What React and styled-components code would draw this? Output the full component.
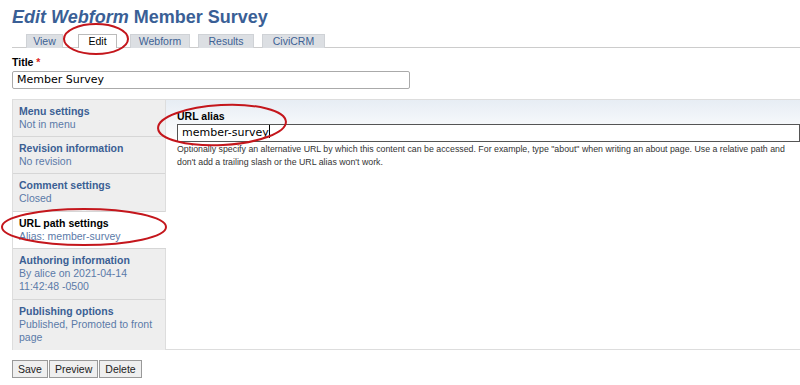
import React from 'react'
import styled, { createGlobalStyle } from 'styled-components'

const Global = createGlobalStyle`
  body {
    margin: 0;
    background: #fff;
    font-family: "Liberation Sans", Arial, sans-serif;
    color: #000;
  }
`

const Page = styled.div`
  position: relative;
  width: 800px;
  height: 385px;
  overflow: hidden;
  padding: 6px 0 0 12px;
  box-sizing: border-box;
`

const Heading = styled.h1`
  margin: 0;
  font-size: 18px;
  font-weight: bold;
  color: #3a5f96;
  line-height: 22px;
  em { font-style: italic; }
`

const Tabs = styled.ul`
  display: flex;
  list-style: none;
  margin: 6px 0 0 0;
  padding: 0 0 0 14px;
  border-bottom: 1px solid #ccc;
  height: 13px;
`

const Tab = styled.li`
  box-sizing: border-box;
  height: 14px;
  width: ${p => p.w}px;
  margin-right: ${p => p.gap}px;
  background: ${p => (p.active ? '#fff' : '#dcdfe3')};
  border: 1px solid ${p => (p.active ? '#bbb' : '#cfd2d6')};
  border-bottom: none;
  font-size: 10.5px;
  line-height: 13px;
  text-align: center;
  color: ${p => (p.active ? '#000' : '#3d6295')};
`

const Label = styled.label`
  display: block;
  font-size: 10.5px;
  font-weight: bold;
  line-height: 12px;
  margin-top: ${p => p.top || 0}px;
  span { color: #d22; }
`

const TextInput = styled.div`
  box-sizing: border-box;
  width: ${p => p.w};
  height: 18px;
  border: 1px solid ${p => (p.dark ? '#555' : '#aaa')};
  border-radius: ${p => (p.dark ? '0' : '2px')};
  margin-top: ${p => (p.dark ? 2 : 3)}px;
  padding: 0 4px;
  font-family: "DejaVu Sans", "Liberation Sans", sans-serif;
  font-size: 11px;
  line-height: 16px;
  background: #fff;
`

const Caret = styled.span`
  display: inline-block;
  width: 1px;
  height: 13px;
  background: #000;
  vertical-align: -2px;
`

const VerticalTabs = styled.div`
  display: flex;
  margin-top: 10px;
  border-top: 1px solid #ddd;
  border-bottom: 1px solid #ddd;
  height: 251px;
  box-sizing: border-box;
`

const Menu = styled.ul`
  list-style: none;
  margin: 0;
  padding: 0;
  width: 154px;
  flex: none;
  background: #eee;
  border-left: 1px solid #ddd;
  border-right: 1px solid #ddd;
  box-sizing: border-box;
`

const MenuItem = styled.li`
  box-sizing: border-box;
  height: ${p => p.h}px;
  padding: 5px 6px 0 6px;
  border-bottom: 1px solid #d6d6d6;
  background: ${p => (p.selected ? '#fff' : '#eee')};
  margin-right: ${p => (p.selected ? '-1px' : '0')};
  font-size: 10.5px;
  line-height: 13px;
  &:last-child { border-bottom: none; }
`

const ItemTitle = styled.div`
  font-weight: bold;
  color: ${p => (p.selected ? '#000' : '#3b5f94')};
`

const ItemSummary = styled.div`
  color: #5b7aa8;
`

const Pane = styled.div`
  flex: 1;
  padding: 10px 0 0 11px;
  background: linear-gradient(#e7edf4 0px, #fff 40px);
`

const Description = styled.div`
  font-size: 8.8px;
  line-height: 13px;
  color: #333;
  margin-top: 1px;
`

const Actions = styled.div`
  display: flex;
  margin-top: 10px;
`

const Button = styled.button`
  height: 18px;
  padding: 0 5px;
  margin-right: 1px;
  font-family: "Liberation Sans", Arial, sans-serif;
  font-size: 10.5px;
  background: #efefef;
  border: 1px solid #999;
  color: #222;
`

const Marks = styled.svg`
  position: absolute;
  left: 0;
  top: 0;
  pointer-events: none;
`

const items = [
  { title: 'Menu settings', summary: 'Not in menu', h: 37 },
  { title: 'Revision information', summary: 'No revision', h: 37 },
  { title: 'Comment settings', summary: 'Closed', h: 38 },
  { title: 'URL path settings', summary: 'Alias: member-survey', h: 37, selected: true },
  { title: 'Authoring information', summary: ['By alice on 2021-04-14', '11:42:48 -0500'], h: 51 },
  { title: 'Publishing options', summary: ['Published, Promoted to front', 'page'], h: 50 },
]

const tabs = [
  { label: 'View', w: 37, gap: 15 },
  { label: 'Edit', w: 39, gap: 13, active: true },
  { label: 'Webform', w: 60, gap: 8 },
  { label: 'Results', w: 56, gap: 8 },
  { label: 'CiviCRM', w: 63, gap: 0 },
]

export default function App() {
  return (
    <Page>
      <Global />
      <Heading><em>Edit Webform</em> Member Survey</Heading>
      <Tabs>
        {tabs.map(t => (
          <Tab key={t.label} w={t.w} gap={t.gap} active={t.active}>{t.label}</Tab>
        ))}
      </Tabs>
      <Label top={8}>Title <span>*</span></Label>
      <TextInput w="398px">Member Survey</TextInput>
      <VerticalTabs>
        <Menu>
          {items.map(it => (
            <MenuItem key={it.title} h={it.h} selected={it.selected}>
              <ItemTitle selected={it.selected}>{it.title}</ItemTitle>
              {(Array.isArray(it.summary) ? it.summary : [it.summary]).map(s => (
                <ItemSummary key={s}>{s}</ItemSummary>
              ))}
            </MenuItem>
          ))}
        </Menu>
        <Pane>
          <Label>URL alias</Label>
          <TextInput w="100%" dark>member-survey<Caret /></TextInput>
          <Description>
            Optionally specify an alternative URL by which this content can be accessed. For example, type "about" when writing an about page. Use a relative path and don't add a trailing slash or the URL alias won't work.
          </Description>
        </Pane>
      </VerticalTabs>
      <Actions>
        <Button>Save</Button>
        <Button>Preview</Button>
        <Button>Delete</Button>
      </Actions>
      <Marks width="800" height="385">
        <g fill="none" stroke="#c4161c" strokeWidth="2">
          <ellipse cx="96" cy="39" rx="32" ry="15" />
          <ellipse cx="222" cy="125" rx="64" ry="20" transform="rotate(-3 222 125)" />
          <ellipse cx="84" cy="227" rx="82" ry="18" />
        </g>
      </Marks>
    </Page>
  )
}
